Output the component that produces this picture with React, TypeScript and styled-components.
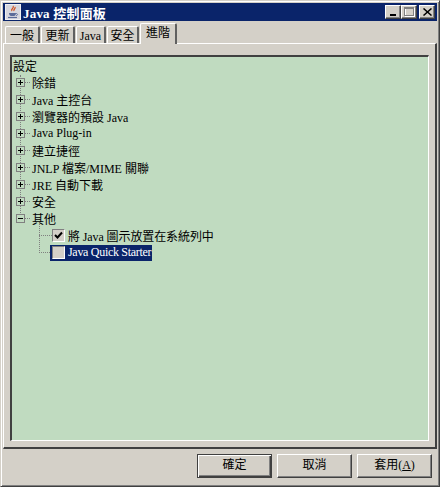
import React from "react";
import styled, { createGlobalStyle } from "styled-components";

const FACE = '#d4d0c8';
const FONT = '"Liberation Serif", "Noto Sans CJK TC", serif';

const Global = createGlobalStyle`
  html, body { margin: 0; padding: 0; background: ${FACE}; }
`;

const Frame = styled.div`
  width: 440px;
  height: 487px;
  box-sizing: border-box;
  display: flex;
  flex-direction: column;
  background: ${FACE};
  border-top: 1px solid ${FACE};
  border-left: 1px solid ${FACE};
  border-right: 1px solid #404040;
  border-bottom: 1px solid #404040;
  box-shadow: inset 1px 1px 0 #fff, inset -1px -1px 0 #808080;
  padding: 2px;
  font-family: ${FONT};
  color: #000;
`;

const TitleBar = styled.div`
  height: 18px;
  flex: none;
  background: #0a246a;
  display: flex;
  align-items: center;
  padding: 0 2px 0 2px;
  color: #fff;
  font-size: 13px;
  font-weight: 700;
`;

const TitleText = styled.span`
  margin-left: 2px;
  flex: 1;
  letter-spacing: 0.2px;
`;

const WinButton = styled.div<{ $gap?: number }>`
  width: 16px;
  height: 14px;
  margin-left: ${(p) => p.$gap ?? 0}px;
  box-sizing: border-box;
  background: ${FACE};
  border-top: 1px solid #fff;
  border-left: 1px solid #fff;
  border-right: 1px solid #404040;
  border-bottom: 1px solid #404040;
  box-shadow: inset -1px -1px 0 #808080;
  display: flex;
  align-items: center;
  justify-content: center;
  svg { display: block; }
`;

const TabStrip = styled.div`
  height: 22px;
  flex: none;
  display: flex;
  align-items: flex-end;
  padding: 0 0 0 1px;
  position: relative;
  z-index: 1;
`;

const Tab = styled.div<{ $active?: boolean; $w: number }>`
  width: ${(p) => p.$w}px;
  height: ${(p) => (p.$active ? 21 : 17)}px;
  margin-left: 1px;
  margin-bottom: ${(p) => (p.$active ? -1 : 0)}px;
  box-sizing: border-box;
  background: ${FACE};
  border-top: 1px solid #fff;
  border-left: 1px solid #fff;
  border-right: 2px solid #606060;
  border-top-left-radius: 2px;
  border-top-right-radius: 2px;
  font-size: 12px;
  line-height: ${(p) => (p.$active ? 19 : 18)}px;
  text-align: center;
`;

const TabPanel = styled.div`
  flex: 1;
  display: flex;
  padding: 11px 6px 6px 6px;
  border-top: 1px solid #fff;
  border-left: 1px solid #fff;
  border-right: 2px solid #404040;
  border-bottom: 2px solid #404040;
  min-height: 0;
`;

const TreeBox = styled.div`
  flex: 1;
  position: relative;
  box-sizing: border-box;
  background: #c0dbc0;
  border-top: 2px solid #404040;
  border-left: 2px solid #404040;
  border-right: 1px solid #fff;
  border-bottom: 1px solid #fff;
  padding: 0 0 0 1px;
  font-size: 12px;
`;

const Row = styled.div<{ $indent?: number }>`
  height: 17px;
  display: flex;
  align-items: center;
  padding-left: ${(p) => p.$indent ?? 0}px;
  white-space: nowrap;
`;

const Expander = styled.span`
  width: 9px;
  height: 9px;
  flex: none;
  margin-left: 3px;
  box-sizing: border-box;
  border: 1px solid #808080;
  background: #c0dbc0;
  position: relative;
  z-index: 1;
  &::before {
    content: "";
    position: absolute;
    left: 1px;
    top: 3px;
    width: 5px;
    height: 1px;
    background: #000;
  }
`;

const PlusExpander = styled(Expander)`
  &::after {
    content: "";
    position: absolute;
    left: 3px;
    top: 1px;
    width: 1px;
    height: 5px;
    background: #000;
  }
`;

const HDots = styled.span<{ $w: number }>`
  width: ${(p) => p.$w}px;
  flex: none;
  border-top: 1px dotted #808080;
`;

const Spine = styled.div<{ $left: number; $top: number; $h: number }>`
  position: absolute;
  left: ${(p) => p.$left}px;
  top: ${(p) => p.$top}px;
  height: ${(p) => p.$h}px;
  border-left: 1px dotted #808080;
`;

const Label = styled.span`
  margin-left: 2px;
`;

const CheckLabel = styled.span`
  margin-left: 3px;
  letter-spacing: -0.1px;
`;

const QuickLabel = styled.span`
  margin-left: 3px;
  letter-spacing: -0.3px;
`;

const Check = styled.span`
  width: 13px;
  height: 13px;
  flex: none;
  box-sizing: border-box;
  background: ${FACE};
  border-top: 1px solid #808080;
  border-left: 1px solid #808080;
  border-right: 1px solid #fff;
  border-bottom: 1px solid #fff;
  svg { display: block; }
`;

const Selected = styled.span`
  display: flex;
  align-items: center;
  height: 16px;
  padding: 0 1px 0 2px;
  background: #0a246a;
  color: #fff;
`;

const Footer = styled.div`
  height: 35px;
  flex: none;
  display: flex;
  justify-content: flex-end;
  align-items: flex-start;
  gap: 5px;
  padding: 5px 5px 0 0;
  box-sizing: border-box;
`;

const DialogButton = styled.div<{ $primary?: boolean }>`
  width: 75px;
  height: 24px;
  box-sizing: border-box;
  border-top: ${(p) => (p.$primary ? "1px solid #404040" : "1px solid #fff")};
  border-left: ${(p) => (p.$primary ? "1px solid #404040" : "1px solid #fff")};
  border-right: 1px solid #404040;
  border-bottom: 1px solid #404040;
  box-shadow: ${(p) =>
    p.$primary
      ? "inset 1px 1px 0 #fff, inset -1px -1px 0 #404040, inset -2px -2px 0 #808080"
      : "inset -1px -1px 0 #808080"};
  font-size: 12px;
  line-height: 21px;
  text-align: center;
  u { text-underline-offset: 1px; }
`;

const JavaIcon = () => (
  <svg width="16" height="16" viewBox="0 0 16 16">
    <rect x="0.5" y="0.5" width="15" height="15" fill="#d6d6de" stroke="#eeeef2" />
    <path d="M8 2c2 2-3 3-1 5M10 3c1 2-2 2-1 4" stroke="#d2501e" strokeWidth="1.2" fill="none" />
    <path d="M4 9h7c0 2-1 3-2 3H6c-1 0-2-1-2-3z" fill="#5a6a9a" />
    <path d="M11 9.5c2 0 2 2 0 2" stroke="#5a6a9a" fill="none" />
    <path d="M3 13.5h9" stroke="#5a6a9a" strokeWidth="1.2" />
  </svg>
);

const branches = [
  "除錯",
  "Java 主控台",
  "瀏覽器的預設 Java",
  "Java Plug-in",
  "建立捷徑",
  "JNLP 檔案/MIME 關聯",
  "JRE 自動下載",
  "安全",
];

const tabs = [
  { text: "一般", w: 35 },
  { text: "更新", w: 34 },
  { text: "Java", w: 30 },
  { text: "安全", w: 32 },
];

export default function App() {
  return (
    <Frame>
      <Global />
      <TitleBar>
        <JavaIcon />
        <TitleText>Java 控制面板</TitleText>
        <WinButton>
          <svg width="10" height="8" viewBox="0 0 10 8">
            <rect x="2" y="6" width="6" height="2" fill="#000" />
          </svg>
        </WinButton>
        <WinButton>
          <svg width="11" height="10" viewBox="0 0 11 10">
            <rect x="1.5" y="1.5" width="9" height="8" fill="none" stroke="#fff" />
            <rect x="0.5" y="0.5" width="9" height="8" fill="none" stroke="#808080" />
            <rect x="0" y="0" width="10" height="2" fill="#808080" />
          </svg>
        </WinButton>
        <WinButton $gap={2}>
          <svg width="9" height="8" viewBox="0 0 9 8">
            <path d="M0.5 0.5l8 7M8.5 0.5l-8 7" stroke="#000" strokeWidth="1.5" />
          </svg>
        </WinButton>
      </TitleBar>
      <TabStrip>
        {tabs.map((t) => (
          <Tab key={t.text} $w={t.w}>
            {t.text}
          </Tab>
        ))}
        <Tab $active $w={37}>
          進階
        </Tab>
      </TabStrip>
      <TabPanel>
        <TreeBox>
          <Spine $left={8} $top={18} $h={138} />
          <Spine $left={27} $top={167} $h={29} />
          <Row>設定</Row>
          {branches.map((b) => (
            <Row key={b}>
              <PlusExpander />
              <HDots $w={5} />
              <Label>{b}</Label>
            </Row>
          ))}
          <Row>
            <Expander />
            <HDots $w={5} />
            <Label>其他</Label>
          </Row>
          <Row $indent={26}>
            <HDots $w={13} />
            <Check>
              <svg width="11" height="11" viewBox="0 0 11 11">
                <path d="M2 5l2.5 2.5L9 2.5" stroke="#000" strokeWidth="2" fill="none" />
              </svg>
            </Check>
            <CheckLabel>將 Java 圖示放置在系統列中</CheckLabel>
          </Row>
          <Row $indent={26}>
            <HDots $w={11} />
            <Selected>
              <Check />
              <QuickLabel>Java Quick Starter</QuickLabel>
            </Selected>
          </Row>
        </TreeBox>
      </TabPanel>
      <Footer>
        <DialogButton $primary>確定</DialogButton>
        <DialogButton>取消</DialogButton>
        <DialogButton>
          套用(<u>A</u>)
        </DialogButton>
      </Footer>
    </Frame>
  );
}
